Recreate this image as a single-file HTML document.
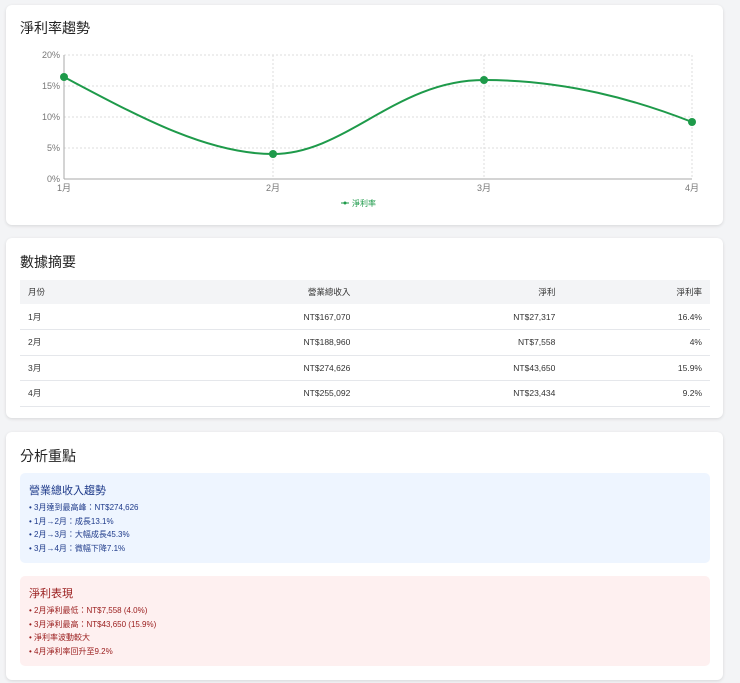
<!DOCTYPE html>
<html><head><meta charset="utf-8"><style>
*{margin:0;padding:0;box-sizing:border-box}
body{width:740px;height:683px;background:#f3f4f6;font-family:"Liberation Sans","Noto Sans CJK TC",sans-serif;position:relative;overflow:hidden}
.card{position:absolute;left:6px;width:717px;background:#fff;border-radius:6px;box-shadow:0 1px 3px rgba(0,0,0,.12)}
h2{position:absolute;left:14px;font-size:14px;font-weight:normal;color:#222}
table{position:absolute;left:14px;top:42px;width:690px;border-collapse:collapse;font-size:8.5px;color:#333}
th{background:#f3f4f6;font-weight:normal;height:24px;padding:0 8px}
td{height:25.5px;padding:0 8px;border-bottom:1px solid #e5e7eb}
.r{text-align:right}.l{text-align:left}
.box{position:absolute;left:14px;width:690px;border-radius:5px;padding:9px 9px}
.box h3{font-size:11px;font-weight:normal;margin-bottom:3px}
.box p{font-size:8px;line-height:13.5px}
</style></head><body>
<div class="card" style="top:5px;height:220px">
<h2 style="top:13px">淨利率趨勢</h2>
<svg width="717" height="220" style="position:absolute;left:0;top:0" font-family="Liberation Sans" font-size="9" fill="#777">
<g stroke="#ddd" stroke-dasharray="2,2" stroke-width="1">
<line x1="58" y1="50" x2="686" y2="50"/><line x1="58" y1="81" x2="686" y2="81"/><line x1="58" y1="112" x2="686" y2="112"/><line x1="58" y1="143" x2="686" y2="143"/>
<line x1="267" y1="50" x2="267" y2="174"/><line x1="478" y1="50" x2="478" y2="174"/><line x1="686" y1="50" x2="686" y2="174"/>
</g>
<line x1="58" y1="50" x2="58" y2="174" stroke="#aaa"/><line x1="58" y1="174" x2="686" y2="174" stroke="#aaa"/>
<text x="54" y="53" text-anchor="end">20%</text><text x="54" y="84" text-anchor="end">15%</text><text x="54" y="115" text-anchor="end">10%</text><text x="54" y="146" text-anchor="end">5%</text><text x="54" y="177" text-anchor="end">0%</text>
<text x="58" y="186" text-anchor="middle">1月</text><text x="267" y="186" text-anchor="middle">2月</text><text x="478" y="186" text-anchor="middle">3月</text><text x="686" y="186" text-anchor="middle">4月</text>
<path d="M58,72 C130,110 200,149 267,149 C340,149 390,75 478,75 C560,75 630,95 686,117" fill="none" stroke="#1e9a4a" stroke-width="2"/>
<g fill="#1e9a4a"><circle cx="58" cy="72" r="4"/><circle cx="267" cy="149" r="4"/><circle cx="478" cy="75" r="4"/><circle cx="686" cy="117" r="4"/></g>
<line x1="335" y1="198" x2="343" y2="198" stroke="#1e9a4a"/><circle cx="339" cy="198" r="1.5" fill="#1e9a4a"/>
<text x="346" y="201" fill="#1e9a4a" font-size="8" font-family="Liberation Sans,Noto Sans CJK TC">淨利率</text>
</svg>
</div>
<div class="card" style="top:238px;height:180px">
<h2 style="top:14px">數據摘要</h2>
<table><tr><th class="l">月份</th><th class="r">營業總收入</th><th class="r">淨利</th><th class="r">淨利率</th></tr>
<tr><td>1月</td><td class="r">NT$167,070</td><td class="r">NT$27,317</td><td class="r">16.4%</td></tr>
<tr><td>2月</td><td class="r">NT$188,960</td><td class="r">NT$7,558</td><td class="r">4%</td></tr>
<tr><td>3月</td><td class="r">NT$274,626</td><td class="r">NT$43,650</td><td class="r">15.9%</td></tr>
<tr><td>4月</td><td class="r">NT$255,092</td><td class="r">NT$23,434</td><td class="r">9.2%</td></tr></table>
</div>
<div class="card" style="top:432px;height:248px">
<h2 style="top:14px">分析重點</h2>
<div class="box" style="top:41px;height:90px;background:#eef5ff;color:#1e3a8a"><h3>營業總收入趨勢</h3>
<p>• 3月達到最高峰：NT$274,626</p><p>• 1月→2月：成長13.1%</p><p>• 2月→3月：大幅成長45.3%</p><p>• 3月→4月：微幅下降7.1%</p></div>
<div class="box" style="top:144px;height:90px;background:#fef0f0;color:#991b1b"><h3>淨利表現</h3>
<p>• 2月淨利最低：NT$7,558 (4.0%)</p><p>• 3月淨利最高：NT$43,650 (15.9%)</p><p>• 淨利率波動較大</p><p>• 4月淨利率回升至9.2%</p></div>
</div>
</body></html>
